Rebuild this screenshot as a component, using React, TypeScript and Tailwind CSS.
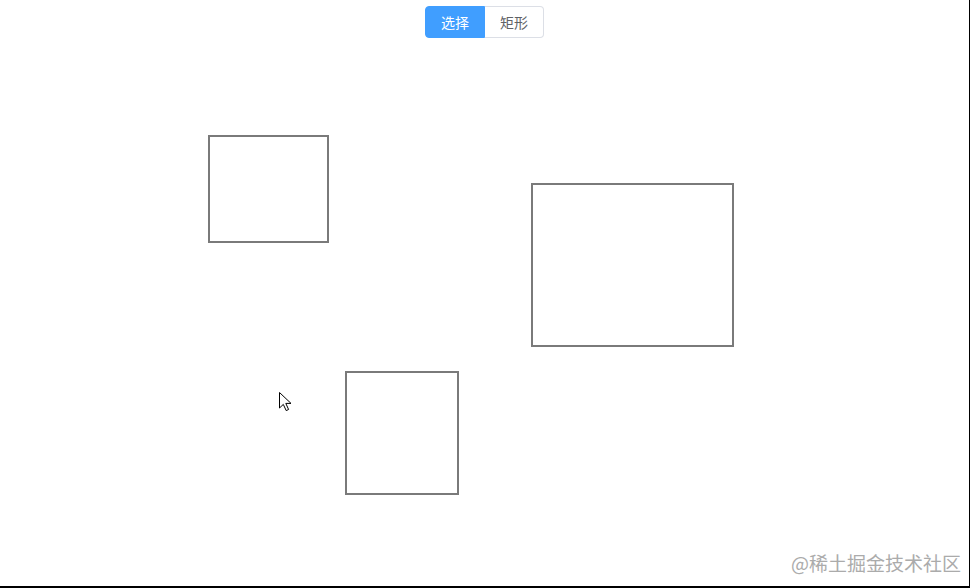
export default function App() {
  return (
    <div
      className="relative w-[970px] h-[588px] bg-white border-r border-b-2 border-black overflow-hidden"
      style={{ fontFamily: '"Noto Sans CJK SC", "Noto Sans", sans-serif' }}
    >
      {/* toolbar */}
      <div className="flex justify-center pt-[6px]">
        <div className="flex h-[32px] text-[14px] leading-none">
          <button className="w-[60px] rounded-l-[4px] bg-[#409eff] border border-[#409eff] text-white">
            选择
          </button>
          <button className="w-[59px] rounded-r-[4px] bg-white border border-l-0 border-[#dcdfe6] text-[#606266]">
            矩形
          </button>
        </div>
      </div>

      {/* canvas shapes */}
      <svg className="absolute left-0 top-0" width="970" height="588">
        <g fill="none" stroke="#7a7a7a" strokeWidth="2">
          <rect x="209" y="136" width="119" height="106" />
          <rect x="532" y="184" width="201" height="162" />
          <rect x="346" y="372" width="112" height="122" />
        </g>
        <path
          d="M279.5 392.5 L279.5 408 L283.3 404.4 L286.2 410.6 L288.6 409.5 L285.8 403.4 L291 403.4 Z"
          fill="white"
          stroke="black"
          strokeWidth="1"
          strokeLinejoin="miter"
        />
      </svg>

      {/* watermark */}
      <div className="absolute right-[8px] top-[549px] text-[19px] text-[#ababab]">
        @稀土掘金技术社区
      </div>
    </div>
  );
}
